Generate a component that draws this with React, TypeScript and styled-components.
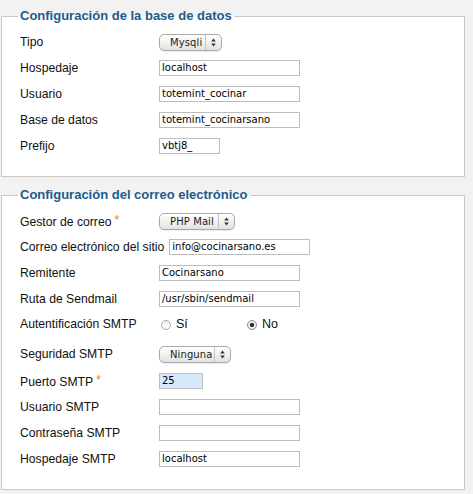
import React from "react";
import styled, { createGlobalStyle } from "styled-components";

const Global = createGlobalStyle`
  html, body {
    margin: 0;
    padding: 0;
    background: #f2f2f2;
  }
  body {
    font-family: "Liberation Sans", Arial, sans-serif;
  }
`

const Page = styled.div`
  width: 473px;
  height: 494px;
  padding-left: 1px;
  box-sizing: border-box;
  overflow: hidden;
`

const Box = styled.fieldset<{ $top: number }>`
  width: 464px;
  box-sizing: border-box;
  margin: ${p => p.$top}px 0 0 0;
  padding: 5px 0 17px 18px;
  border: 1px solid #c9c9c9;
  background: #fff;
  min-width: 0;
`

const Legend = styled.legend`
  font-family: "Liberation Sans", Arial, sans-serif;
  font-weight: bold;
  font-size: 13px;
  line-height: 16px;
  color: #205b8b;
  padding: 0 2px;
  margin-left: -2px;
`

const Row = styled.div<{ $h?: number; $mt?: number }>`
  display: flex;
  align-items: center;
  height: ${p => p.$h ?? 26}px;
  margin-top: ${p => p.$mt ?? 0}px;
`

const Label = styled.div`
  flex: 0 0 auto;
  min-width: 134px;
  margin-right: 5px;
  font-size: 12.2px;
  color: #111;
  white-space: nowrap;
  margin-top: -1px;
`

const Star = styled.span`
  color: #e8831e;
  font-size: 12px;
  vertical-align: 2px;
  margin-left: 3px;
`

const Input = styled.div<{ $w?: number; $blue?: boolean }>`
  width: ${p => p.$w ?? 141}px;
  height: 16px;
  box-sizing: border-box;
  border: 1px solid #bdbdbd;
  background: ${p => (p.$blue ? "#d6eafc" : "#fff")};
  font-family: "DejaVu Sans", Verdana, sans-serif;
  font-size: 10px;
  line-height: 14px;
  padding-left: 2px;
  color: #000;
  white-space: nowrap;
  overflow: hidden;
`

const SelectBox = styled.div<{ $w: number }>`
  width: ${p => p.$w}px;
  height: 17px;
  box-sizing: border-box;
  border: 1px solid #a9a9a9;
  border-radius: 5px;
  background: linear-gradient(#ffffff, #f1f1f1 50%, #e2e2e2);
  box-shadow: 0 1px 1px rgba(0, 0, 0, 0.08);
  display: flex;
  align-items: center;
  font-family: "DejaVu Sans", Verdana, sans-serif;
  font-size: 10px;
  color: #1a1a1a;
`

const SelectText = styled.span`
  flex: 1;
  padding-left: 10px;
  letter-spacing: 0.1px;
  white-space: nowrap;
`

const SelectArrows = styled.span`
  width: 15px;
  height: 15px;
  border-left: 1px solid #c4c4c4;
  display: flex;
  align-items: center;
  justify-content: center;
`

const Radios = styled.div`
  display: flex;
  align-items: center;
`

const RadioItem = styled.label<{ $w?: number }>`
  display: flex;
  align-items: center;
  width: ${p => (p.$w ? `${p.$w}px` : "auto")};
  font-size: 12.5px;
  color: #111;
`

const Dot = styled.span<{ $on?: boolean }>`
  width: 10px;
  height: 10px;
  box-sizing: border-box;
  border-radius: 50%;
  border: 1px solid ${p => (p.$on ? "#8d8d8d" : "#a6a6a6")};
  background: ${p => (p.$on
    ? "radial-gradient(circle, #2d2d2d 0 1.8px, #e8eef5 2.4px)"
    : "linear-gradient(#f4f4f4, #ffffff)")};
  margin: 0 5px 0 2px;
  margin-top: 1px;
`

const Select = ({ text, w }: { text: string; w: number }) => (
  <SelectBox $w={w}>
    <SelectText>{text}</SelectText>
    <SelectArrows>
      <svg width="5" height="9" viewBox="0 0 5 9">
        <path d="M2.5 0.5 L4.8 3.6 L0.2 3.6 Z" fill="#333" />
        <path d="M2.5 8.5 L4.8 5.4 L0.2 5.4 Z" fill="#333" />
      </svg>
    </SelectArrows>
  </SelectBox>
)

const App = () => {
  return (
    <Page>
      <Global />
      <Box $top={8}>
        <Legend>Configuración de la base de datos</Legend>
        <Row>
          <Label>Tipo</Label>
          <Select text="Mysqli" w={63} />
        </Row>
        <Row>
          <Label>Hospedaje</Label>
          <Input>localhost</Input>
        </Row>
        <Row>
          <Label>Usuario</Label>
          <Input>totemint_cocinar</Input>
        </Row>
        <Row>
          <Label>Base de datos</Label>
          <Input>totemint_cocinarsano</Input>
        </Row>
        <Row>
          <Label>Prefijo</Label>
          <Input $w={61}>vbtj8_</Input>
        </Row>
      </Box>

      <Box $top={10}>
        <Legend>Configuración del correo electrónico</Legend>
        <Row>
          <Label>Gestor de correo<Star>*</Star></Label>
          <Select text="PHP Mail" w={76} />
        </Row>
        <Row>
          <Label>Correo electrónico del sitio</Label>
          <Input>info@cocinarsano.es</Input>
        </Row>
        <Row>
          <Label>Remitente</Label>
          <Input>Cocinarsano</Input>
        </Row>
        <Row>
          <Label>Ruta de Sendmail</Label>
          <Input>/usr/sbin/sendmail</Input>
        </Row>
        <Row $h={24}>
          <Label>Autentificación SMTP</Label>
          <Radios>
            <RadioItem $w={86}><Dot />Sí</RadioItem>
            <RadioItem><Dot $on />No</RadioItem>
          </Radios>
        </Row>
        <Row $mt={5}>
          <Label>Seguridad SMTP</Label>
          <Select text="Ninguna" w={72} />
        </Row>
        <Row $mt={1}>
          <Label>Puerto SMTP<Star>*</Star></Label>
          <Input $w={44} $blue>25</Input>
        </Row>
        <Row>
          <Label>Usuario SMTP</Label>
          <Input />
        </Row>
        <Row>
          <Label>Contraseña SMTP</Label>
          <Input />
        </Row>
        <Row>
          <Label>Hospedaje SMTP</Label>
          <Input>localhost</Input>
        </Row>
      </Box>
    </Page>
  )
}

export default App;
